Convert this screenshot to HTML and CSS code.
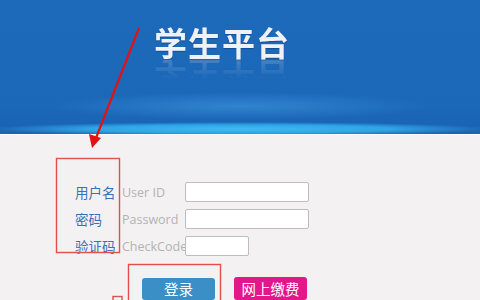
FILE: index.html
```html
<html>
<head>
<meta charset="utf-8">
<link rel="stylesheet" href="styles.css">
</head>
  <body>
    <div class="banner">
      <h1 class="title">学生平台</h1>
    </div>

    <div class="login">
      <div class="form">
        <span class="cn">用户名</span>
        <span class="en">User ID</span>
        <input class="field" type="text">

        <span class="cn">密码</span>
        <span class="en">Password</span>
        <input class="field" type="password">

        <span class="cn">验证码</span>
        <span class="en">CheckCode</span>
        <input class="field short" type="text">
      </div>

      <div class="actions">
        <button class="btn btn-login">登录</button>
        <button class="btn btn-pay">网上缴费</button>
      </div>
    </div>

    <!-- annotation drawn over the screenshot -->
    <svg class="annot" width="480" height="300" viewBox="0 0 480 300">
      <line x1="139" y1="28" x2="96" y2="138" stroke="#e31212" stroke-width="2.2" />
      <polygon points="92,148 89,134 101,138" fill="#e31212" />
      <rect x="56.5" y="158.5" width="63" height="94" fill="none" stroke="#e0504f" stroke-width="1.4" />
      <rect x="128.5" y="264.5" width="92" height="40" fill="none" stroke="#e0504f" stroke-width="1.4" />
      <rect x="113" y="296.5" width="9" height="6" fill="none" stroke="#e0504f" stroke-width="1.4" />
    </svg>
  </body>
</html>
```

FILE: styles.css
```css
body {
    margin: 0;
    background: #f3f1f1;
    font-family: "Noto Sans CJK SC", "Open Sans", sans-serif;
    overflow: hidden;
}

.banner {
    height: 134px;
    border-bottom: 1px solid #fbfbfb;
    background:
        radial-gradient(ellipse 52% 7px at 50% 129px, #3cbcf4 0%, #2fa4e6 60%, rgba(32,120,200,0) 100%),
        radial-gradient(ellipse 40% 14px at 50% 106px, rgba(70,160,230,0.5) 0%, rgba(40,120,200,0) 100%),
        linear-gradient(#1d6abb, #1b67b8 80%, #1b63b3);
}

.title {
    margin: 0;
    padding: 20px 0 0 154px;
    font-size: 33px;
    font-weight: 700;
    line-height: 44px;
    letter-spacing: 1px;
    color: #eef1f6;
    text-shadow: 0 1px 1px rgba(0, 40, 100, 0.4);
    -webkit-box-reflect: below -10px linear-gradient(transparent 60%, rgba(255, 255, 255, 0.25));
}

.login {
    padding: 47px 0 0 75px;
}

.form {
    display: grid;
    grid-template-columns: 47px 63px auto;
    grid-auto-rows: 20px;
    row-gap: 7px;
    align-items: center;
    justify-items: start;
}

.cn {
    font-size: 13.5px;
    color: #3b6fbb;
    white-space: nowrap;
}

.en {
    font-family: "Open Sans", "Liberation Sans", sans-serif;
    font-size: 12.5px;
    color: #b3b3b3;
    white-space: nowrap;
}

.field {
    box-sizing: border-box;
    width: 124px;
    height: 20px;
    margin: 0;
    border: 1px solid #bdbdbd;
    border-radius: 2px;
    background: #fff;
}

.field.short {
    width: 64px;
}

.actions {
    display: flex;
    gap: 19px;
    margin-top: 22px;
    padding-left: 67px;
}

.btn {
    width: 73px;
    height: 22px;
    padding: 0;
    border: none;
    border-radius: 3px;
    color: #fff;
    font-family: "Noto Sans CJK SC", sans-serif;
    font-size: 14.5px;
    line-height: 22px;
}

.btn-login {
    background: #3a8fc7;
}

.btn-pay {
    margin-top: -1px;
    height: 23px;
    background: #e3168b;
}

.annot {
    position: absolute;
    left: 0;
    top: 0;
    pointer-events: none;
}
```
